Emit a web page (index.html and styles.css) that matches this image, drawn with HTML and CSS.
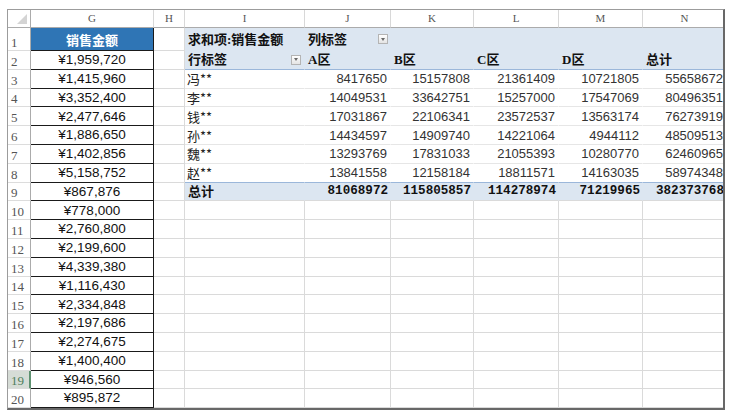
FILE: index.html
```html
<!DOCTYPE html>
<html>
<head>
<meta charset="utf-8">
<link rel="stylesheet" href="styles.css">
</head>
<body>
<div class="frame">
<div class="sheet">
  <div class="c hd corner"><svg width="10" height="10" viewBox="0 0 10 10"><polygon points="10,0 10,10 0,10" fill="#d4d4d4"/></svg></div>
  <div class="c hd">G</div><div class="c hd">H</div><div class="c hd">I</div><div class="c hd">J</div><div class="c hd">K</div><div class="c hd">L</div><div class="c hd">M</div><div class="c hd">N</div>

  <div class="c rn">1</div><div class="c gh">销售金额</div><div class="c e"></div>
  <div class="c pv r1 ptxt">求和项:销售金额</div><div class="c pv r1 ptxt">列标签<span class="dd dd-j"></span></div><div class="c pv r1"></div><div class="c pv r1"></div><div class="c pv r1"></div><div class="c pv r1"></div>

  <div class="c rn">2</div><div class="c g">¥1,959,720</div><div class="c e"></div>
  <div class="c pv r2 ptxt">行标签<span class="dd dd-i"></span></div><div class="c pv r2 ptxt">A区</div><div class="c pv r2 ptxt">B区</div><div class="c pv r2 ptxt">C区</div><div class="c pv r2 ptxt">D区</div><div class="c pv r2 ptxt">总计</div>

  <div class="c rn">3</div><div class="c g">¥1,415,960</div><div class="c e"></div>
  <div class="c pd nm">冯**</div><div class="c pd num">8417650</div><div class="c pd num">15157808</div><div class="c pd num">21361409</div><div class="c pd num">10721805</div><div class="c pd num">55658672</div>

  <div class="c rn">4</div><div class="c g">¥3,352,400</div><div class="c e"></div>
  <div class="c pd nm">李**</div><div class="c pd num">14049531</div><div class="c pd num">33642751</div><div class="c pd num">15257000</div><div class="c pd num">17547069</div><div class="c pd num">80496351</div>

  <div class="c rn">5</div><div class="c g">¥2,477,646</div><div class="c e"></div>
  <div class="c pd nm">钱**</div><div class="c pd num">17031867</div><div class="c pd num">22106341</div><div class="c pd num">23572537</div><div class="c pd num">13563174</div><div class="c pd num">76273919</div>

  <div class="c rn">6</div><div class="c g">¥1,886,650</div><div class="c e"></div>
  <div class="c pd nm">孙**</div><div class="c pd num">14434597</div><div class="c pd num">14909740</div><div class="c pd num">14221064</div><div class="c pd num">4944112</div><div class="c pd num">48509513</div>

  <div class="c rn">7</div><div class="c g">¥1,402,856</div><div class="c e"></div>
  <div class="c pd nm">魏**</div><div class="c pd num">13293769</div><div class="c pd num">17831033</div><div class="c pd num">21055393</div><div class="c pd num">10280770</div><div class="c pd num">62460965</div>

  <div class="c rn">8</div><div class="c g">¥5,158,752</div><div class="c e"></div>
  <div class="c pd nm">赵**</div><div class="c pd num">13841558</div><div class="c pd num">12158184</div><div class="c pd num">18811571</div><div class="c pd num">14163035</div><div class="c pd num">58974348</div>

  <div class="c rn">9</div><div class="c g">¥867,876</div><div class="c e"></div>
  <div class="c pt ptxt">总计</div><div class="c pt tnum">81068972</div><div class="c pt tnum">115805857</div><div class="c pt tnum">114278974</div><div class="c pt tnum">71219965</div><div class="c pt tnum">382373768</div>

  <div class="c rn">10</div><div class="c g">¥778,000</div><div class="c e"></div><div class="c e"></div><div class="c e"></div><div class="c e"></div><div class="c e"></div><div class="c e"></div><div class="c e"></div>
  <div class="c rn">11</div><div class="c g">¥2,760,800</div><div class="c e"></div><div class="c e"></div><div class="c e"></div><div class="c e"></div><div class="c e"></div><div class="c e"></div><div class="c e"></div>
  <div class="c rn">12</div><div class="c g">¥2,199,600</div><div class="c e"></div><div class="c e"></div><div class="c e"></div><div class="c e"></div><div class="c e"></div><div class="c e"></div><div class="c e"></div>
  <div class="c rn">13</div><div class="c g">¥4,339,380</div><div class="c e"></div><div class="c e"></div><div class="c e"></div><div class="c e"></div><div class="c e"></div><div class="c e"></div><div class="c e"></div>
  <div class="c rn">14</div><div class="c g">¥1,116,430</div><div class="c e"></div><div class="c e"></div><div class="c e"></div><div class="c e"></div><div class="c e"></div><div class="c e"></div><div class="c e"></div>
  <div class="c rn">15</div><div class="c g">¥2,334,848</div><div class="c e"></div><div class="c e"></div><div class="c e"></div><div class="c e"></div><div class="c e"></div><div class="c e"></div><div class="c e"></div>
  <div class="c rn">16</div><div class="c g">¥2,197,686</div><div class="c e"></div><div class="c e"></div><div class="c e"></div><div class="c e"></div><div class="c e"></div><div class="c e"></div><div class="c e"></div>
  <div class="c rn">17</div><div class="c g">¥2,274,675</div><div class="c e"></div><div class="c e"></div><div class="c e"></div><div class="c e"></div><div class="c e"></div><div class="c e"></div><div class="c e"></div>
  <div class="c rn">18</div><div class="c g">¥1,400,400</div><div class="c e"></div><div class="c e"></div><div class="c e"></div><div class="c e"></div><div class="c e"></div><div class="c e"></div><div class="c e"></div>
  <div class="c rn sel">19</div><div class="c g">¥946,560</div><div class="c e"></div><div class="c e"></div><div class="c e"></div><div class="c e"></div><div class="c e"></div><div class="c e"></div><div class="c e"></div>
  <div class="c rn">20</div><div class="c g">¥895,872</div><div class="c e"></div><div class="c e"></div><div class="c e"></div><div class="c e"></div><div class="c e"></div><div class="c e"></div><div class="c e"></div>
</div>
</div>
</body>
</html>
```

FILE: styles.css
```css
html, body {
  margin: 0;
  padding: 0;
  background: #ffffff;
}

.frame {
  margin: 9px 0 0 7px;
  width: 715px;
  height: 398px;
  border-top: 1px solid #9c9c9c;
  border-left: 1px solid #9c9c9c;
  border-right: 2px solid #686868;
  border-bottom: 2px solid #686868;
  overflow: hidden;
  background: #ffffff;
}

.sheet {
  display: grid;
  grid-template-columns: 23px 123px 31px 120px 86px 83px 85px 84px 84px;
  grid-template-rows: 18px 23px repeat(19, 18.8px);
  width: 719px;
}

.c {
  box-sizing: border-box;
  border-right: 1px solid #dadada;
  border-bottom: 1px solid #dadada;
  display: flex;
  align-items: center;
  overflow: hidden;
  white-space: nowrap;
  line-height: 1;
}

.hd {
  justify-content: center;
  font-family: "Liberation Serif", "DejaVu Serif", serif;
  font-size: 11px;
  color: #555555;
  background: #ffffff;
  border-bottom-color: #ababab;
  border-right-color: #d8d8d8;
}

.corner {
  justify-content: flex-end;
  align-items: flex-end;
  padding: 0 3px 3px 0;
  border-right-color: #ababab;
}

.rn {
  font-family: "Liberation Serif", "DejaVu Serif", serif;
  font-size: 13px;
  color: #555555;
  align-items: flex-end;
  padding: 0 0 1px 3px;
  border-right-color: #ababab;
  border-bottom-color: #dcdcdc;
}

.rn.sel {
  background: #d6dcd6;
  color: #4f7f5c;
  border-right: 2px solid #5d9170;
}

.g {
  justify-content: center;
  font-family: "Liberation Sans", Arial, sans-serif;
  font-size: 13.5px;
  color: #111111;
  border-right-color: #1a1a1a;
  border-bottom-color: #1a1a1a;
}

.gh {
  justify-content: center;
  background: #2f75b5;
  color: #ffffff;
  font-family: "Noto Sans CJK SC", sans-serif;
  font-weight: bold;
  font-size: 13px;
  border-right-color: #1a1a1a;
  border-bottom-color: #1a1a1a;
}

.pv {
  background: #dce6f1;
  border-right-color: transparent;
}

.pv.r1 {
  border-bottom-color: transparent;
}

.pv.r2 {
  border-bottom-color: #9bb7da;
}

.ptxt {
  font-family: "Liberation Serif", "Noto Sans CJK SC", serif;
  font-weight: bold;
  font-size: 13px;
  color: #111111;
  padding-left: 3px;
}

.pd {
  border-right-color: transparent;
  border-bottom-color: #e6e6e6;
}

.nm {
  font-family: "Noto Sans CJK SC", sans-serif;
  font-size: 13px;
  color: #222222;
  padding-left: 2px;
}

.num {
  justify-content: flex-end;
  font-family: "Liberation Sans", Arial, sans-serif;
  font-size: 13px;
  color: #333333;
  padding-right: 3px;
}

.pt {
  background: #dce6f1;
  border-right-color: transparent;
  border-top: 1px solid #9bb7da;
  margin-top: -1px;
  border-bottom-color: #dadada;
}

.tnum {
  justify-content: flex-end;
  font-family: "Liberation Mono", "DejaVu Sans Mono", monospace;
  font-weight: bold;
  font-size: 12.6px;
  color: #111111;
  padding-right: 2px;
}

.dd {
  box-sizing: border-box;
  width: 10px;
  height: 10px;
  margin-left: auto;
  border: 1px solid #b4b4b4;
  background: linear-gradient(#ffffff, #e4e4e4);
  display: flex;
  align-items: center;
  justify-content: center;
}

.dd::after {
  content: "";
  border-left: 2.5px solid transparent;
  border-right: 2.5px solid transparent;
  border-top: 3px solid #6a6a6a;
}

.dd-i {
  margin-right: 3px;
}

.dd-j {
  margin-right: 2px;
}
```
